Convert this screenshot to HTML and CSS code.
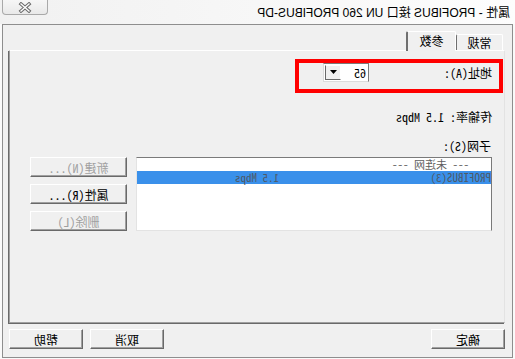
FILE: index.html
```html
<!DOCTYPE html>
<html lang="zh">
<head>
<meta charset="utf-8">
<title>属性 - PROFIBUS 接口</title>
<link rel="stylesheet" href="styles.css">
</head>
<body>
	<div class="window">
		<!-- title bar -->
		<div class="titlebar">
			<span class="title">属性 - PROFIBUS 接口 UN 260 PROFIBUS-DP</span>
			<span class="close">
				<svg width="14" height="11" viewBox="0 0 14 11">
					<path d="M3 2 L11 9 M11 2 L3 9" stroke="#6a6a6a" stroke-width="3.4" stroke-linecap="square"/>
					<path d="M3 2 L11 9 M11 2 L3 9" stroke="#fdfdfd" stroke-width="1.4" stroke-linecap="square"/>
				</svg>
			</span>
		</div>

		<div class="frame">
			<!-- tabs -->
			<div class="tabs">
				<div class="tab">常规</div>
				<div class="tab sel">参数</div>
			</div>

			<div class="panel">
				<div class="highlight">
					<span class="label">地址(A):</span>
					<div class="combo">
						<span class="combo-val">65</span>
						<span class="combo-btn">
							<svg width="8" height="5" viewBox="0 0 8 5"><path d="M0 0 H7 L3.5 4 Z" fill="#000"/></svg>
						</span>
					</div>
				</div>

				<div class="line rate">传输率: 1.5 Mbps</div>
				<div class="line subnet">子网(S):</div>

				<div class="subnet-row">
					<div class="list">
						<div class="item first"><span class="col1 indent">--- 未连网 ---</span></div>
						<div class="item sel"><span class="col1">PROFIBUS(3)</span><span class="col2">1.5 Mbps</span></div>
					</div>
					<div class="side-btns">
						<button class="btn wide" disabled>新建(N)...</button>
						<button class="btn wide">属性(R)...</button>
						<button class="btn wide" disabled>删除(L)</button>
					</div>
				</div>
			</div>

			<!-- dialog buttons -->
			<div class="footer">
				<button class="btn">确定</button>
				<div class="footer-right">
					<button class="btn">取消</button>
					<button class="btn">帮助</button>
				</div>
			</div>
		</div>
	</div>
</body>
</html>
```

FILE: styles.css
```css
body {
	margin: 0;
	background: #fff;
}

.window {
	width: 515px;
	height: 359px;
	overflow: hidden;
	background: #fafafa;
	transform: scaleX(-1);
	font: 12px "Noto Sans Mono CJK SC", "Liberation Mono", "Noto Sans CJK SC", monospace;
	color: #000;
}

.titlebar {
	height: 24px;
	display: flex;
	justify-content: space-between;
	align-items: flex-start;
	background: linear-gradient(to right, #fdfdfd, #f1f1f1);
}

.title {
	margin-left: 5px;
	padding-top: 3px;
	line-height: 14px;
	font: 12px "Liberation Sans", "Noto Sans CJK SC", sans-serif;
	color: #000;
}

.close {
	width: 46px;
	height: 15px;
	margin-right: 2px;
	box-sizing: border-box;
	border: 1px solid #a9a9a9;
	border-top: none;
	border-radius: 0 0 4px 4px;
	background: linear-gradient(#f6f6f6, #e9e9e9);
	display: flex;
	justify-content: center;
	align-items: center;
}

.frame {
	height: 334px;
	margin: 0 2px;
	box-sizing: border-box;
	border: 1px solid #8e8e8e;
	background: #f0f0f0;
	padding: 6px 6px 0 7px;
}

.tabs {
	height: 19px;
	margin-left: 2px;
	display: flex;
	align-items: flex-end;
}

.tab {
	width: 47px;
	height: 16px;
	box-sizing: border-box;
	border: 1px solid #fff;
	border-right: 1px solid #6f6f6f;
	border-bottom: none;
	border-radius: 2px 2px 0 0;
	text-align: center;
	line-height: 15px;
}

.tab.sel {
	width: 50px;
	height: 20px;
	margin-bottom: -1px;
	position: relative;
	z-index: 1;
	background: #f0f0f0;
	border-right: 2px solid #6f6f6f;
	line-height: 18px;
}

.panel {
	height: 273px;
	box-sizing: border-box;
	border-top: 1px solid #fff;
	border-left: 1px solid #e3e3e3;
	border-right: 1px solid #a0a0a0;
	border-bottom: 1px solid #a0a0a0;
	box-shadow: 1px 1px 0 #696969;
}

.highlight {
	width: 208px;
	height: 34px;
	margin: 8px 0 0 1px;
	box-sizing: border-box;
	border: 4px solid #ff0000;
	padding-left: 7px;
	display: flex;
	align-items: center;
	padding-bottom: 7px;
}

.label {
	width: 123px;
}

.combo {
	width: 46px;
	height: 19px;
	box-sizing: border-box;
	border-top: 1px solid #7a7a7a;
	border-left: 1px solid #7a7a7a;
	border-right: 1px solid #dcdcdc;
	border-bottom: 1px solid #dcdcdc;
	background: #fff;
	display: flex;
	justify-content: space-between;
	padding: 1px;
}

.combo-val {
	padding-left: 1px;
	line-height: 15px;
}

.combo-btn {
	width: 16px;
	box-sizing: border-box;
	background: #f0f0f0;
	border: 1px solid #fff;
	border-right-color: #696969;
	border-bottom-color: #696969;
	display: flex;
	justify-content: center;
	align-items: center;
}

.line {
	height: 14px;
	line-height: 14px;
	padding-left: 12px;
}

.rate {
	margin-top: 17px;
}

.subnet {
	margin-top: 15px;
	padding-left: 13px;
}

.subnet-row {
	display: flex;
	gap: 9px;
	margin: 4px 0 0 12px;
}

.list {
	width: 356px;
	height: 74px;
	box-sizing: border-box;
	border-top: 1px solid #7a7a7a;
	border-left: 1px solid #7a7a7a;
	border-right: 1px solid #e3e3e3;
	border-bottom: 1px solid #e3e3e3;
	background: #fff;
	font-size: 11px;
}

.item {
	height: 13px;
	line-height: 13px;
	display: flex;
	align-items: center;
	color: #5e5e5e;
	white-space: nowrap;
}

.item.sel {
	background: #3a90ea;
	color: #4e5966;
}

.col1 {
	width: 212px;
}

.col1.indent {
	padding-left: 22px;
}

.side-btns {
	display: flex;
	flex-direction: column;
	gap: 7px;
}

.btn {
	width: 74px;
	height: 20px;
	padding: 0;
	box-sizing: border-box;
	font: inherit;
	color: #000;
	background: #f0f0f0;
	border-top: 1px solid #fff;
	border-right: 1px solid #fff;
	border-left: 1px solid #696969;
	border-bottom: 1px solid #696969;
	box-shadow: inset 1px -1px 0 #a0a0a0;
	line-height: 17px;
}

.btn.wide {
	width: 97px;
}

.btn:disabled {
	color: #a0a0a0;
}

.footer {
	margin-top: 6px;
	display: flex;
	justify-content: space-between;
}

.footer-right {
	display: flex;
	gap: 7px;
}
```
